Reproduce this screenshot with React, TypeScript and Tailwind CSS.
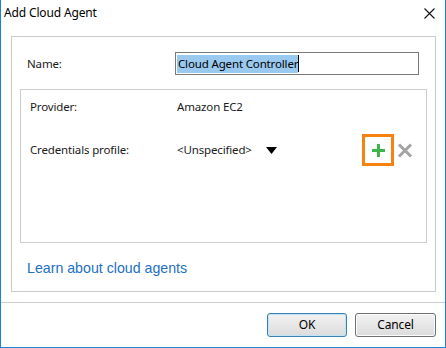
import React from 'react';

const ui = { fontFamily: '"Noto Sans", "Open Sans", sans-serif' };

export default function App() {
  return (
    <div className="w-[446px] h-[348px] flex flex-col bg-white border-x border-b border-[#1883d7] text-[#1a1a1a] text-[11.5px] tracking-[-0.15px]" style={ui}>
      {/* Title bar */}
      <div className="h-[26px] flex items-center justify-between pl-[3px] pr-[10px]">
        <span className="text-[12px] text-black">Add Cloud Agent</span>
        <svg width="11" height="11" viewBox="0 0 11 11" className="mt-[1px]">
          <path d="M0.5 0.5 L10.5 10.5 M10.5 0.5 L0.5 10.5" stroke="#111" strokeWidth="1.1" />
        </svg>
      </div>

      {/* Main panel */}
      <div className="ml-[10px] mr-[9px] mt-[10px] h-[256px] border border-[#cccccc] flex flex-col">
        <div className="flex items-center h-[23px] mt-[15px] pl-[15px] pr-[16px]">
          <span className="w-[148px]">Name:</span>
          <div className="flex-1 h-[23px] border border-[#7a7a7a] flex items-center px-[1px]">
            <span className="bg-[#99c9ef] text-black leading-[18px] pl-[1px]">Cloud Agent Controller</span>
            <span className="w-px h-[17px] bg-black"></span>
          </div>
        </div>

        <div className="mx-[8px] mt-[14px] h-[154px] border border-[#cccccc] flex flex-col pl-[9px]">
          <div className="flex items-center h-[20px] mt-[7px]">
            <span className="w-[147px]">Provider:</span>
            <span>Amazon EC2</span>
          </div>
          <div className="flex items-center h-[32px] mt-[17px]">
            <span className="w-[147px]">Credentials profile:</span>
            <span className="w-[89px]">&lt;Unspecified&gt;</span>
            <svg width="11" height="7" viewBox="0 0 11 7">
              <path d="M0 0 H11 L5.5 7 Z" fill="#000" />
            </svg>
            <div className="ml-[85px] w-[32px] h-[32px] border-[3px] border-[#f7820f] flex items-center justify-center">
              <svg width="15" height="15" viewBox="0 0 15 15">
                <path d="M7.5 1 V14 M1 7.5 H14" stroke="#3cb64a" strokeWidth="3" />
              </svg>
            </div>
            <svg width="16" height="15" viewBox="0 0 16 15" className="ml-[3px]">
              <path d="M2 1.5 L14 13.5 M14 1.5 L2 13.5" stroke="#a3a3a3" strokeWidth="3" />
            </svg>
          </div>
        </div>

        <div className="pl-[15px] mt-[15px]">
          <span className="text-[14.2px] tracking-normal text-[#2270c4]" style={{ fontFamily: '"Liberation Sans", Arial, sans-serif' }}>
            Learn about cloud agents
          </span>
        </div>
      </div>

      {/* Footer */}
      <div className="mt-[10px] border-t border-[#cccccc] flex justify-end gap-[8px] pt-[10px] pr-[9px]">
        <button className="w-[80px] h-[24px] rounded-[3px] border border-[#3c7fb1] bg-gradient-to-b from-[#f2f2f2] to-[#dcdcdc] shadow-[inset_0_0_0_1px_#bfe4f7] text-[12px] text-black">
          OK
        </button>
        <button className="w-[81px] h-[24px] rounded-[3px] border border-[#707070] bg-gradient-to-b from-[#f2f2f2] to-[#dcdcdc] shadow-[inset_0_0_0_1px_#fcfcfc] text-[12px] text-black">
          Cancel
        </button>
      </div>
    </div>
  );
}
